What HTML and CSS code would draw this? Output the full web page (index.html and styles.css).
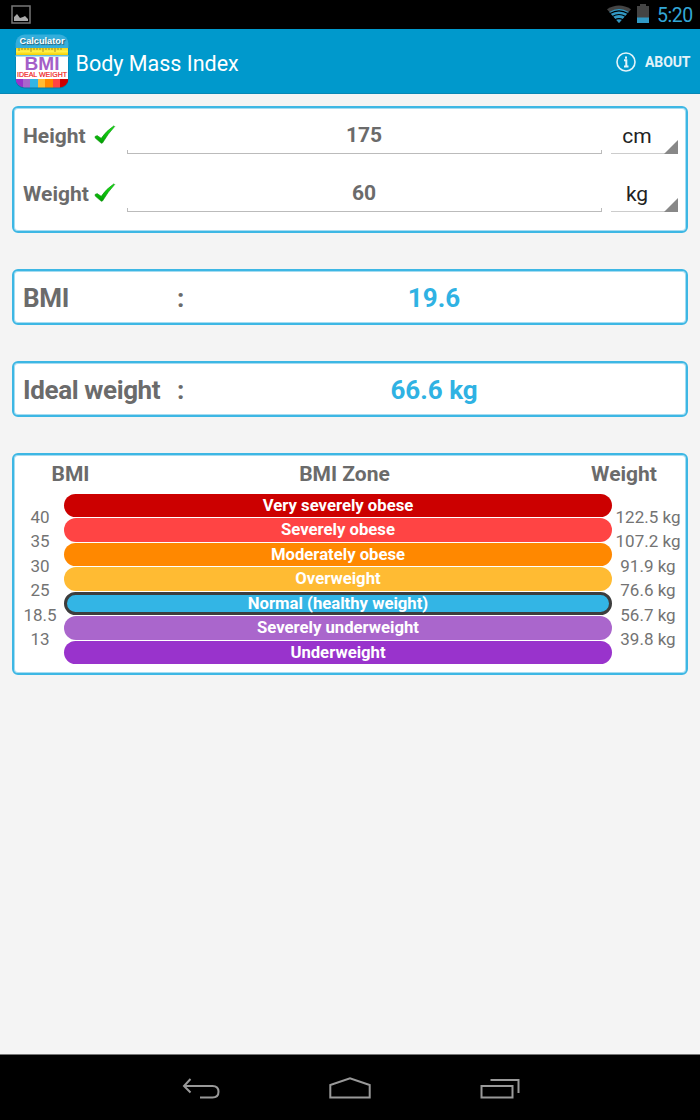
FILE: index.html
```html
<!DOCTYPE html>
<html lang="en">
<head>
<meta charset="utf-8">
<title>Body Mass Index</title>
<link rel="stylesheet" href="styles.css">
</head>
<body>
<div class="screen">
  <header class="status">
    <svg class="picture" width="20" height="20" viewBox="0 0 20 20"><rect x="1" y="2" width="18" height="17" fill="none" stroke="#777" stroke-width="1.500"/><path d="M3 17v-4l3-3 3 4 3-1 2-1 3 3v2z" fill="#aaa"/></svg>
    <svg class="wifi" width="24" height="20" viewBox="0 0 24 20"><path d="M0 4.300Q12-3.200 24 4.300L12 18z" fill="#444"/><path d="M2.300 7Q12 1 21.700 7L12 18z" fill="#3199c4"/><path d="M3 8.500Q12 3.200 21 8.500M5.400 11.500Q12 7.500 18.600 11.500M8 14.700Q12 12.500 16 14.700" fill="none" stroke="#000" stroke-width="1.100"/></svg>
    <svg class="battery" width="12" height="19" viewBox="0 0 12 19"><path d="M0 2h3V0h6v2h3v17H0z" fill="#444"/><path d="M0 13.500h12V19H0z" fill="#3199c4"/></svg>
    <span class="clock">5:20</span>
  </header>
  <div class="actionbar">
    <svg class="logo" width="54" height="55" viewBox="0 0 54 55">
      <defs>
        <clipPath id="round"><rect x=".5" y=".5" width="53" height="53" rx="9"/></clipPath>
        <linearGradient id="gold" x2="0" y2="1"><stop stop-color="#f5d51b"/><stop offset=".5" stop-color="#fff04a"/><stop offset="1" stop-color="#f4ce00"/></linearGradient>
      </defs>
      <rect x=".5" y="1" width="53" height="53.500" rx="9" fill="#087ba5"/>
      <g clip-path="url(#round)">
        <path d="M0 0h54v14H0z" fill="#35aedb"/>
        <path d="M1 14h52v7H1z" fill="url(#gold)"/>
        <path d="M4 14v3m3-3v2m3-2v2m3-2v2m3-2v4m3-4v2m3-2v2m3-2v2m3-2v4m3-4v2m3-2v2m3-2v2m3-2v4m3-4v2m3-2v2" stroke="#806b15" stroke-width=".7"/>
        <path d="M0 21h54v2H0z" fill="#64bfe0"/>
        <path d="M1 22.500h52V45H1z" fill="#fff"/>
        <path d="M1 45h7v9H1z" fill="#93c"/><path d="M8 45h7v9H8z" fill="#a6c"/><path d="M15 45h8v9h-8z" fill="#33b5e5"/><path d="M23 45h7v9h-7z" fill="#fb3"/><path d="M30 45h8v9h-8z" fill="#f80"/><path d="M38 45h7v9h-7z" fill="#f44"/><path d="M45 45h8v9h-8z" fill="#c00"/>
      </g>
      <text class="logo-calc" x="4.500" y="10.300" textLength="45" lengthAdjust="spacingAndGlyphs">Calculator</text>
      <text class="logo-bmi" x="9.500" y="36" textLength="35" lengthAdjust="spacingAndGlyphs">BMI</text>
      <text class="logo-ideal" x="2" y="43.300" textLength="50" lengthAdjust="spacingAndGlyphs">IDEAL WEIGHT</text>
    </svg>
    <h1 class="title">Body Mass Index</h1>
    <svg class="info" width="20" height="20" viewBox="0 0 20 20"><circle cx="10" cy="10" r="9" fill="none" stroke="#e3f3f9" stroke-width="1.600"/><path d="M8 8.300h2.300v5.700M8 14.500h4.500M10 4.500v2.200" fill="none" stroke="#e3f3f9" stroke-width="2"/></svg>
    <span class="about">ABOUT</span>
  </div>
  <main class="content">
    <section class="card form">
      <div class="field">
        <span class="label height-label">Height</span>
        <svg class="tick" width="22" height="20" viewBox="0 0 22 20"><defs><linearGradient id="green" x2="0" y2="1"><stop stop-color="#18e818"/><stop offset="1" stop-color="#009d00"/></linearGradient></defs><path d="M1 11.500l2.200-.9 4 2.700Q12 6 20 .8l.7.700Q14 8.500 8.500 18l-1.200.3L1.200 13z" fill="url(#green)" stroke="#159015" stroke-width=".6"/></svg>
        <span class="input">175</span>
        <span class="unit">cm<svg class="corner" width="14" height="14" viewBox="0 0 14 14"><path d="M14 0v14H0z" fill="#888"/></svg></span>
      </div>
      <div class="field">
        <span class="label weight-label">Weight</span>
        <svg class="tick" width="22" height="20" viewBox="0 0 22 20"><path d="M1 11.500l2.200-.9 4 2.700Q12 6 20 .8l.7.700Q14 8.500 8.500 18l-1.200.3L1.200 13z" fill="url(#green)" stroke="#159015" stroke-width=".6"/></svg>
        <span class="input">60</span>
        <span class="unit">kg<svg class="corner" width="14" height="14" viewBox="0 0 14 14"><path d="M14 0v14H0z" fill="#888"/></svg></span>
      </div>
    </section>
    <section class="card result"><span class="name">BMI</span><span class="colon">:</span><span class="value">19.6</span></section>
    <section class="card result"><span class="name ideal">Ideal weight</span><span class="colon">:</span><span class="value">66.6 kg</span></section>
    <section class="card zones">
      <div class="head"><span class="h-bmi">BMI</span><span class="h-zone">BMI Zone</span><span class="h-weight">Weight</span></div>
      <div class="chart">
        <div class="scale"><span>40</span><span>35</span><span>30</span><span>25</span><span>18.5</span><span>13</span></div>
        <div class="bars">
          <div class="bar darkred">Very severely obese</div>
          <div class="bar red">Severely obese</div>
          <div class="bar orange">Moderately obese</div>
          <div class="bar amber">Overweight</div>
          <div class="bar blue">Normal (healthy weight)</div>
          <div class="bar lilac">Severely underweight</div>
          <div class="bar purple">Underweight</div>
        </div>
        <div class="scale weights"><span>122.5 kg</span><span>107.2 kg</span><span>91.9 kg</span><span>76.6 kg</span><span>56.7 kg</span><span>39.8 kg</span></div>
      </div>
    </section>
  </main>
  <nav class="nav">
    <svg width="40" height="24" viewBox="0 0 40 24"><path d="M10.500 2L4 9l6.500 6.500M4 9h28.500q6 0 6 5.700t-6 5.700H20" fill="none" stroke="#999" stroke-width="2"/></svg>
    <svg width="42" height="24" viewBox="0 0 42 24"><path d="M1.300 20.500V8L21 1.300 40.700 8v12.500z" fill="none" stroke="#999" stroke-width="2"/></svg>
    <svg width="40" height="24" viewBox="0 0 40 24"><path d="M1.500 9h31v11.500h-31zM10.500 3h28v13" fill="none" stroke="#999" stroke-width="2"/></svg>
  </nav>
</div>
</body>
</html>
```
FILE: styles.css
```css
* { box-sizing: border-box; }
body { margin: 0; font-family: Roboto, sans-serif; }
.screen { width: 700px; height: 1120px; display: flex; flex-direction: column; background: #f4f4f4; overflow: hidden; }
svg { display: block; flex: none; }
span, h1 { white-space: nowrap; }

.status { height: 29px; flex: none; background: #000; display: flex; align-items: flex-start; padding: 4px 7px 0 11px; }
.wifi { margin-left: auto; margin-top: 1px; }
.battery { margin: 0 8px 0 6px; }
.clock { font-size: 19.5px; line-height: 24px; width: 36px; color: #33a7d6; letter-spacing: -.5px; }

.actionbar { height: 65px; flex: none; background: #09c; border-bottom: 1px solid #0787b5; display: flex; align-items: center; padding: 0 9px 0 15px; color: #fff; }
.logo { overflow: visible; }
.logo-calc { font: bold 9.5px "Liberation Sans", Arial, sans-serif; fill: #fff; text-shadow: 1px 1px 1px #245b70; }
.logo-bmi { font: bold 18.5px "Liberation Sans", Arial, sans-serif; fill: #a45fc8; }
.logo-ideal { font: 7.5px "Liberation Sans", Arial, sans-serif; fill: #f02020; stroke: #f02020; stroke-width: .2px; }
.title { margin: 4px 0 0 6.5px; font-size: 21.5px; font-weight: 400; }
.info { margin: 2px 9px 0 auto; }
.about { width: 46px; margin-top: 2px; font-size: 14px; font-weight: 700; color: #e3f3f9; letter-spacing: -.1px; }

.content { flex: 1; padding: 12px 12px 0; display: flex; flex-direction: column; gap: 36px; }
.card { background: #fff; border: 2px solid #3db7e4; border-radius: 6px; color: #6b6b6b; box-shadow: inset 0 0 0 1px #a5dcf1; }
.form { height: 127px; padding: 8px 8px 0 9px; display: flex; flex-direction: column; gap: 8px; }
.field { height: 50px; display: grid; grid-template-columns: 71px 33px 475px 68px; align-items: start; }
.field .unit { margin-left: 9px; }
.label { font-size: 21px; font-weight: 700; line-height: 41px; }
.tick { margin-top: 9px; }
.input { height: 38px; text-align: center; font-size: 21px; font-weight: 700; line-height: 39px; background: linear-gradient(#bbb, #bbb) left bottom / 1px 4px no-repeat, linear-gradient(#bbb, #bbb) right bottom / 1px 4px no-repeat, linear-gradient(#bbb, #bbb) left bottom / 100% 1px no-repeat; }
.input { padding-right: 1px; }
.unit { position: relative; width: 67px; height: 38px; padding-right: 15px; text-align: center; font-size: 21px; line-height: 40px; color: #222; background: linear-gradient(#ccc, #ccc) left bottom / 100% 1px no-repeat; }
.corner { position: absolute; right: 0; bottom: 0; }

.result { height: 56px; padding: 2px 0 0 9px; display: grid; grid-template-columns: 154px 10px 1fr; align-items: center; font-size: 26px; font-weight: 700; }
.name { letter-spacing: -.3px; }
.ideal { letter-spacing: -.38px; }
.value { color: #2fb2e3; width: 494px; text-align: center; }

.zones { height: 222px; }
.head { height: 38.500px; display: grid; grid-template-columns: 112px 437px 1fr; text-align: center; font-size: 21px; font-weight: 700; line-height: 38px; }
.h-weight { padding-right: 1px; }
.h-bmi { padding-left: 1px; }
.chart { display: grid; grid-template-columns: 50px 548px 1fr; }
.scale { padding: 11px 0 0 2px; text-align: center; color: #737373; font-size: 17px; }
.scale.weights { padding-left: 0; padding-right: 2px; }
.scale span { display: block; height: 24.500px; line-height: 24.500px; }
.bars { display: flex; flex-direction: column; gap: 1px; }
.bar { height: 23.500px; border-radius: 12px; text-align: center; color: #fff; font-size: 16.700px; font-weight: 700; line-height: 23.500px; }
.darkred { background: #c00; }
.red { background: #f44; }
.orange { background: #f80; }
.amber { background: #fb3; }
.blue { background: #33b5e5; border: 3px solid #3d3d3d; line-height: 17.500px; }
.lilac { background: #a6c; }
.purple { background: #93c; }

.nav { height: 66px; flex: none; background: #000; border-top: 1px solid #777; display: flex; justify-content: center; gap: 109px; padding-top: 22px; }
```
